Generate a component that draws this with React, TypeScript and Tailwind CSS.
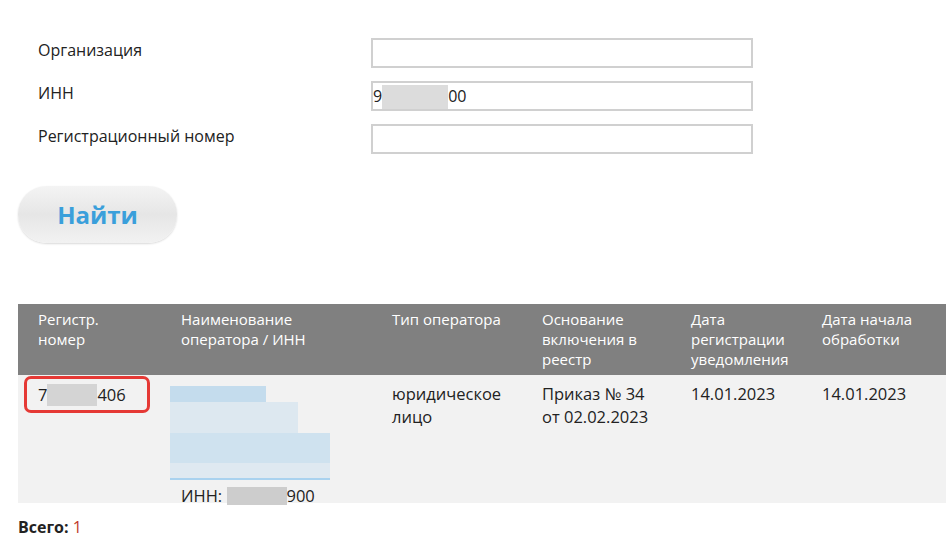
export default function App() {
  const f = { fontFamily: '"Open Sans", sans-serif' };
  return (
    <div className="w-[946px] h-[542px] bg-white overflow-hidden relative text-[#222]" style={f}>
      <div className="pt-[38px] pl-[38px] flex flex-col gap-[13px]">
        {[
          ["Организация", ""],
          ["ИНН", "inn"],
          ["Регистрационный номер", ""],
        ].map(([l, v]) => (
          <div key={l} className="flex items-center h-[30px]">
            <div className="w-[333px] text-[16px] -mt-[6px]">{l}</div>
            <div className="w-[382px] h-[30px] border-2 border-[#d0d0d0] bg-white flex items-center text-[16px]">
              {v && (
                <span className="flex items-center">
                  9<span className="inline-block w-[66px] h-[24px] bg-[#dcdcdc] mt-[2px]"></span>00
                </span>
              )}
            </div>
          </div>
        ))}
      </div>
      <div className="ml-[18px] mt-[32px] w-[159px] h-[57px] rounded-[28px] bg-gradient-to-b from-[#f4f4f4] via-[#e6e6e6] to-[#f2f2f2] shadow-[0_1px_2px_rgba(0,0,0,0.15)] flex items-center justify-center text-[24px] font-bold text-[#3a9fdb]">
        Найти
      </div>
      <div className="ml-[18px] mt-[61px] w-[940px] text-[15px] leading-[20px]">
        <div className="grid grid-cols-[163px_211px_150px_149px_131px_1fr] bg-[#808080] text-white h-[71px] pt-[5px]">
          <div className="pl-[20px]">Регистр.<br />номер</div>
          <div>Наименование<br />оператора / ИНН</div>
          <div>Тип оператора</div>
          <div>Основание<br />включения в<br />реестр</div>
          <div>Дата<br />регистрации<br />уведомления</div>
          <div>Дата начала<br />обработки</div>
        </div>
        <div className="grid grid-cols-[163px_211px_150px_149px_131px_1fr] bg-[#f2f2f2] h-[128px] pt-[7px] text-[16.5px] leading-[23px]">
          <div className="pl-[6px]">
            <div className="-mt-[6px] inline-flex items-center border-[3px] border-[#e53935] rounded-[7px] h-[37px] w-[126px] px-[11px]">
              7<span className="inline-block w-[50px] h-[22px] bg-[#d4d4d4]"></span>406
            </div>
          </div>
          <div className="-ml-[11px] relative">
            <div className="mt-[4px] w-[96px] h-[16px] bg-[#c4dced]"></div>
            <div className="w-[128px] h-[31px] bg-[#dde8f0]"></div>
            <div className="w-[160px] h-[30px] bg-[#cfe2ef]"></div>
            <div className="w-[160px] h-[17px] bg-[#dfe9f1] border-b-2 border-[#a9d2ef]"></div>
            <div className="ml-[11px] mt-[4px] flex items-center">ИНН:&nbsp;<span className="inline-block w-[60px] h-[18px] bg-[#cdcdcd]"></span>900</div>
          </div>
          <div>юридическое<br />лицо</div>
          <div>Приказ № 34<br />от 02.02.2023</div>
          <div>14.01.2023</div>
          <div>14.01.2023</div>
        </div>
      </div>
      <div className="ml-[18px] mt-[12px] text-[16px]"><b>Всего:</b> <span className="text-[#c0392b]">1</span></div>
    </div>
  );
}
